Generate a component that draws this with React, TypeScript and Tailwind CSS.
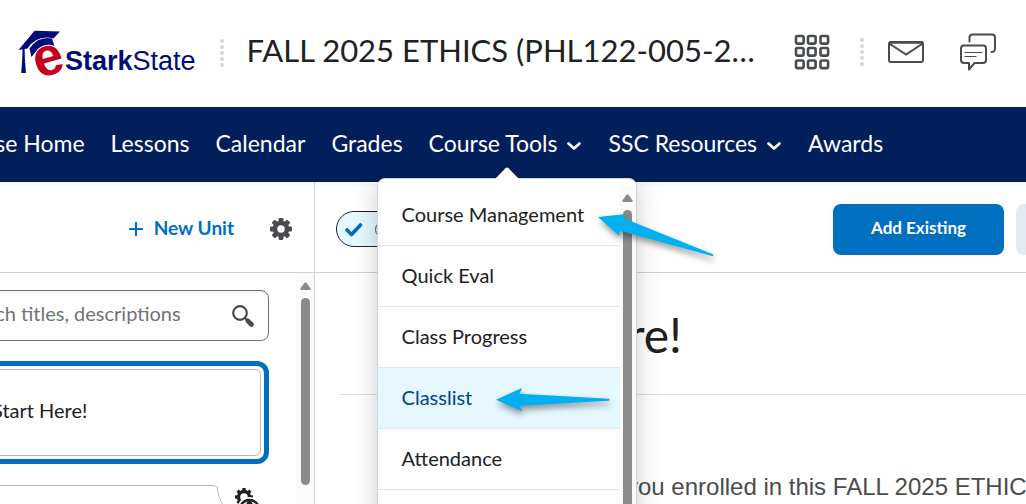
import React from "react";

const teeth = [0, 45, 90, 135, 180, 225, 270, 315];

function Gear({ className }: { className: string }) {
  return (
    <svg viewBox="0 0 22 22" className={className} aria-hidden="true">
      <circle cx="11" cy="11" r="6" fill="none" stroke="currentColor" strokeWidth="4.6" />
      {teeth.map((a) => (
        <rect key={a} x="8.6" y="0" width="4.8" height="4.4" rx="1.2" fill="currentColor" transform={`rotate(${a} 11 11)`} />
      ))}
    </svg>
  );
}

function Logo() {
  return (
    <a href="#home" aria-label="eStarkState" className="flex shrink-0 items-center pt-[3px] text-[#000c78]">
      <svg viewBox="0 0 47 50" className="h-[50px] w-[47px] shrink-0" aria-hidden="true">
        <g fill="#000c78">
          <path d="M.5 20 16.500.8 42 1.500 35.500 8.500Q19 4.500 9.500 18.500Z" />
          <path d="M4.600 18h2l.3 11L8 43H3.200L4.200 29Z" />
          <path d="M11.500 18.500Q20 6 34 8.500L36.500 16Q22 14 13.500 27Z" />
        </g>
        <text x="30.500" y="45" textAnchor="middle" transform="rotate(-16 30 31)" fill="#c4001f" stroke="#fff" strokeWidth="2" paintOrder="stroke" className="font-['Liberation_Sans',sans-serif] text-[54px] font-bold">e</text>
      </svg>
      <span className="mt-[11px] font-['Liberation_Sans',sans-serif] text-[27px] leading-8">
        <b>Stark</b>State
      </span>
    </a>
  );
}

function Dots() {
  return (
    <svg viewBox="0 0 4 30" className="h-[30px] w-1 shrink-0 fill-[#cdd5dc]" aria-hidden="true">
      {[2, 8, 14, 20, 26].map((y) => (
        <circle key={y} cx="2" cy={y + 1} r="1.900" />
      ))}
    </svg>
  );
}

function Chevron() {
  return (
    <svg viewBox="0 0 14 8" className="mt-1 mr-px h-2 w-3.5" fill="none" stroke="currentColor" strokeWidth="2.600" strokeLinecap="round" strokeLinejoin="round" aria-hidden="true">
      <path d="M1.500 1.500 7 6.500l5.500-5" />
    </svg>
  );
}

function ScrollUp() {
  return (
    <svg viewBox="0 0 11 8" className="h-2 w-[11px] fill-[#8b8b8b]" aria-hidden="true">
      <path d="M4.500.8Q5.500-.4 6.500.8L10.600 6.500Q11 8 9.600 8H1.400Q0 8 .4 6.500Z" />
    </svg>
  );
}

function Header() {
  return (
    <header className="flex h-[107px] shrink-0 items-center bg-white pl-[18px] text-[#494c4e]">
      <Logo />
      <div className="ml-6 flex pb-0.5"><Dots /></div>
      <a href="#course" className="ml-[23px] w-[520px] truncate pb-2 text-[31px] leading-10 text-[#202122]">
        FALL 2025 ETHICS (PHL122-005-2…
      </a>
      <div className="ml-auto flex shrink-0 items-center pr-[29px] pb-1">
        <button aria-label="Select a course">
          <svg viewBox="0 0 36 36" className="h-9 w-9" fill="none" stroke="currentColor" strokeWidth="2.600">
            {[1.5, 13.5, 26].map((y) =>
              [1.5, 13.5, 26].map((x) => <rect key={`${x}-${y}`} x={x + 0.5} y={y + 0.5} width="7.600" height="7.600" rx="1.500" />)
            )}
          </svg>
        </button>
        <div className="ml-[30px] flex"><Dots /></div>
        <button aria-label="Messages" className="ml-6">
          <svg viewBox="0 0 36 24" className="h-6 w-9" fill="none" stroke="currentColor" strokeWidth="2">
            <rect x="1" y="2" width="34" height="20" rx="2" />
            <path d="M1 2.500h34" strokeWidth="2.600" />
            <path d="M2 4l16 10.500L34 4" />
          </svg>
        </button>
        <button aria-label="Discussions" className="ml-[35px]">
          <svg viewBox="0 0 38 38" className="h-[38px] w-[38px]" fill="none" stroke="currentColor" strokeWidth="2" strokeLinecap="round" strokeLinejoin="round">
            <path d="M10.500 8.500V4.500a3 3 0 0 1 3-3H33a3 3 0 0 1 3 3V16a3.200 3.200 0 0 1-3.500 3" />
            <path d="M5 12.500h19a3 3 0 0 1 3 3V27a3 3 0 0 1-3 3h-8.500l-5.500 6.500V30H5a3 3 0 0 1-3-3V15.500a3 3 0 0 1 3-3Z" />
            <path d="M6 19.500h17M6 23.500h11" strokeWidth="1.200" />
          </svg>
        </button>
      </div>
    </header>
  );
}

const tools = ["Course Management", "Quick Eval", "Class Progress", "Classlist", "Attendance"];

function ToolsMenu() {
  return (
    <div className="absolute top-[71px] left-[-52px] z-10 h-[400px] w-[260px] rounded-lg border border-[#cdd5dc] bg-white text-[#202122] shadow-[0_4px_24px_rgba(0,0,0,0.2)]">
      <svg viewBox="0 0 26 13" className="absolute top-[-12px] left-[116px] h-[13px] w-[26px] fill-white" aria-hidden="true">
        <path d="M0 13 11.500 1.200q1.500-1.400 3 0L26 13Z" />
      </svg>
      <div className="flex h-full pt-1.5">
        <ul className="grow">
          {tools.map((t) => (
            <li key={t}>
              <a
                href="#tool"
                className={
                  t === "Classlist"
                    ? "flex h-[61px] items-center border-b border-[#dfe6ee] bg-[#e6f7ff] pb-[3px] pl-6 text-xl text-[#004489]"
                    : "flex h-[61px] items-center border-b border-[#dfe6ee] pb-[3px] pl-6 text-xl"
                }
              >
                {t}
              </a>
            </li>
          ))}
        </ul>
        <div className="flex w-4 shrink-0 flex-col items-center gap-2 bg-[#fafafa] pt-[9px]">
          <ScrollUp />
          <div className="w-[9px] grow rounded-t-full bg-[#8b8b8b]" />
        </div>
      </div>
    </div>
  );
}

function NavBar() {
  return (
    <nav className="flex h-[75px] shrink-0 items-center gap-[26px] bg-[#001f5b] text-[23px] whitespace-nowrap text-white">
      <a href="#home" className="-ml-[54px] pb-0.5">Course Home</a>
      <a href="#lessons" className="pb-0.5">Lessons</a>
      <a href="#calendar" className="pb-0.5">Calendar</a>
      <a href="#grades" className="pb-0.5">Grades</a>
      <div className="relative flex h-full items-center">
        <button className="flex items-center gap-[10px] pb-0.5" aria-expanded="true">Course Tools <Chevron /></button>
        <ToolsMenu />
      </div>
      <button className="flex items-center gap-[10px] pb-0.5">SSC Resources <Chevron /></button>
      <a href="#awards" className="pb-0.5">Awards</a>
    </nav>
  );
}

function Sidebar() {
  return (
    <aside className="flex w-[315px] shrink-0 flex-col overflow-hidden border-r border-[#cdd5dc]">
      <div className="flex h-[91px] shrink-0 items-center justify-end gap-9 border-b border-[#cdd5dc] pt-[3px] pr-[22px]">
        <button className="flex items-center gap-[11px] text-[19px] font-bold text-[#006fbf]">
          <svg viewBox="0 0 14 14" className="h-3.5 w-3.5" stroke="currentColor" strokeWidth="2.200" strokeLinecap="round" aria-hidden="true">
            <path d="M7 1v12M1 7h12" />
          </svg>
          <span>New Unit</span>
        </button>
        <button aria-label="Settings" className="text-[#494c4e]"><Gear className="h-[22px] w-[22px]" /></button>
      </div>
      <div className="flex grow">
        <div className="-ml-[60px] min-w-0 grow pt-[17px] pr-[27px]">
          <label className="flex h-[51px] items-center rounded-lg border border-[#6e7376] pr-3.5 pl-4 shadow-[inset_0_2px_0_#f2f3f4]">
            <input
              type="search"
              aria-label="Search titles, descriptions"
              placeholder="Search titles, descriptions"
              className="w-full min-w-0 bg-transparent pb-1.5 text-xl outline-none placeholder:text-[#6e7376]"
            />
            <svg viewBox="0 0 22 22" className="h-[22px] w-[22px] shrink-0 text-[#494c4e]" fill="none" stroke="currentColor" aria-hidden="true">
              <circle cx="8" cy="8" r="6.800" strokeWidth="2.200" />
              <path d="m12.500 12.500 3 3" strokeWidth="2" />
              <path d="m15.800 15.800 3.700 3.700" strokeWidth="4.600" strokeLinecap="round" />
            </svg>
          </label>
          <div className="mt-5 rounded-xl border-[5px] border-[#006fbf] p-[3px]">
            <a href="#start" className="flex h-[87px] items-center rounded-md border border-[#b1b9be] pb-1.5 pl-[43px] text-xl text-[#202122]">
              Start Here!
            </a>
          </div>
          <div className="mt-[21px] flex items-start">
            <div className="h-6 w-[277px] shrink-0 rounded-tr-[4px] border-t border-[#b1b9be]" />
            <svg viewBox="0 0 56 20" className="h-5 w-14 shrink-0" fill="none" aria-hidden="true">
              <path d="M0 .5Q1 13 6 20" stroke="#b1b9be" />
              <circle cx="27" cy="12" r="5.500" stroke="#202122" strokeWidth="3.400" />
              {teeth.map((a) => (
                <rect key={a} x="25.300" y="3" width="3.400" height="4" fill="#202122" transform={`rotate(${a} 27 12)`} />
              ))}
              <path d="M23 20q3-6 9.500-6t9.500 6" fill="#fff" stroke="#fff" strokeWidth="4" />
              <path d="M24 20q3-5 8.500-5t8.500 5" stroke="#202122" strokeWidth="2.400" />
              <circle cx="32.500" cy="19" r="3" fill="#202122" />
            </svg>
          </div>
        </div>
        <div className="flex w-[18px] shrink-0 flex-col items-center gap-2 bg-[#fafafa] pt-[9px]">
          <ScrollUp />
          <div className="h-[187px] w-[9px] rounded-full bg-[#8b8b8b]" />
        </div>
      </div>
    </aside>
  );
}

function Content() {
  return (
    <main className="min-w-0 grow overflow-hidden">
      <div className="flex h-[91px] items-center border-b border-[#cdd5dc] pt-1 pl-[21px]">
        <button aria-label="Completed" className="flex h-9 w-28 items-center gap-3 rounded-full border border-[#202122] bg-[#e6f7ff] pl-2">
          <svg viewBox="0 0 18 15" className="h-[15px] w-[18px]" fill="none" stroke="#006fbf" strokeWidth="3.600" strokeLinecap="round" strokeLinejoin="round">
            <path d="m2 8 4.500 4.500L15.500 3" />
          </svg>
          <span className="h-[17px] w-[17px] rounded-full border border-[#494c4e]" />
        </button>
        <div className="-mr-10 ml-auto flex gap-3 text-[17px] font-bold">
          <button className="h-[51px] w-[171px] rounded-lg bg-[#006fbf] pb-0.5 text-white">Add Existing</button>
          <button aria-label="More" className="h-[51px] w-[50px] rounded-lg bg-[#e3e9f1]" />
        </div>
      </div>
      <div className="ml-6">
        <h1 className="flex h-[122px] items-center border-b border-[#dcdfe3] pt-0.5 pl-[114px] text-5xl text-[#202122]">Start Here!</h1>
        <p className="mt-[78px] pl-[287px] font-['Liberation_Sans',sans-serif] text-2xl leading-7 whitespace-nowrap text-[#494c4e]">
          you enrolled in this FALL 2025 ETHICS
        </p>
      </div>
    </main>
  );
}

function Arrows() {
  return (
    <div className="pointer-events-none absolute top-[205px] left-[490px] z-20">
      <svg viewBox="490 205 235 220" className="h-[220px] w-[235px] fill-[#00b0f0] drop-shadow-[1px_4px_3px_rgba(0,0,0,0.4)]" aria-hidden="true">
        <path d="M598 217 626 214 623 218 713.500 254.500 712.700 256.300 620 230.700 619 235.700Z" />
        <path d="M496 399.700 522 388 519.700 393.700 609.300 398.700V400.700L519.700 405.700 522 411.300Z" />
      </svg>
    </div>
  );
}

export default function App() {
  return (
    <div className="relative flex h-screen flex-col overflow-hidden bg-white font-[Lato,sans-serif]">
      <Header />
      <NavBar />
      <div className="flex min-h-0 grow shadow-[inset_0_5px_0_#fafafa]">
        <Sidebar />
        <Content />
      </div>
      <Arrows />
    </div>
  );
}
